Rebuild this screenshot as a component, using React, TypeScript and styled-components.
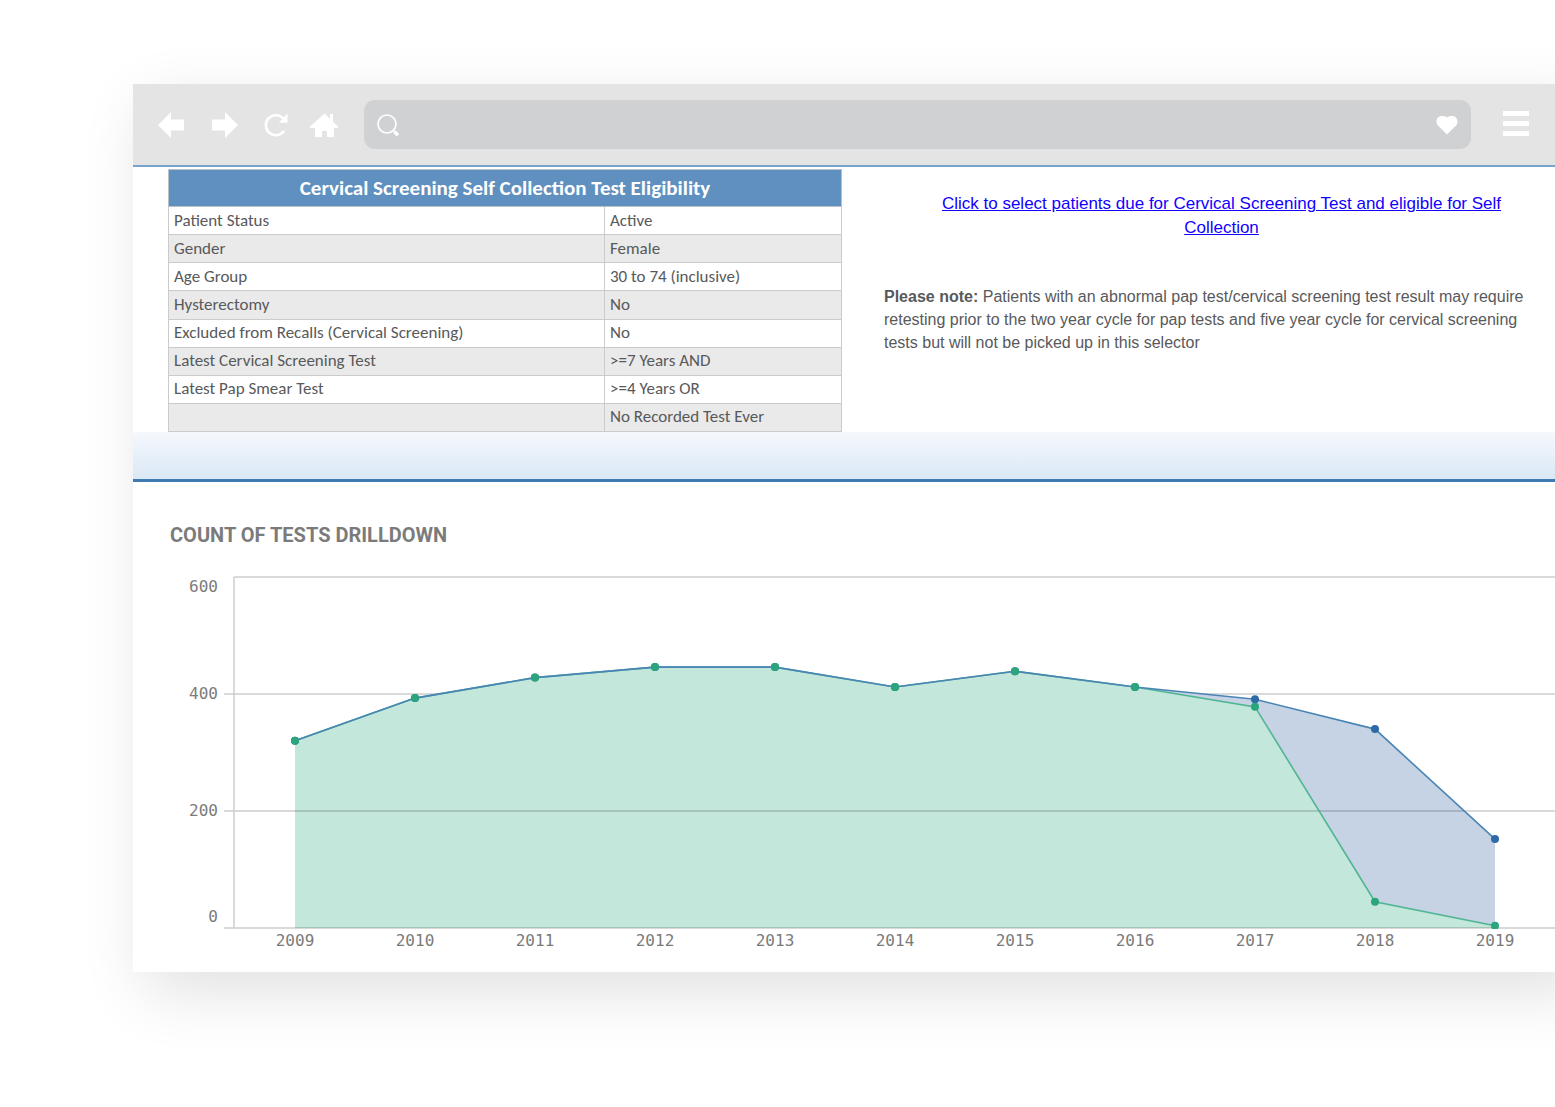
import React from "react";
import styled, { createGlobalStyle } from "styled-components";

const GlobalStyle = createGlobalStyle`
  *, *::before, *::after { box-sizing: border-box; }
  body {
    margin: 0;
    background: #fff;
    font-family: "Liberation Sans", Arial, sans-serif;
  }
`;

const Page = styled.div`
  min-height: 100vh;
  overflow: hidden;
  padding: 84px 0 136px 133px;
`;

/* The window runs past the right edge of the page */
const BrowserWindow = styled.div`
  margin-right: -20px;
  background: #fff;
  box-shadow: 12px 20px 60px rgba(0, 0, 0, 0.12);
`;

const Toolbar = styled.header`
  display: flex;
  align-items: center;
  height: 83px;
  padding: 0 46px 0 23px;
  background: #e4e4e4;
  border-bottom: 2px solid #77a3cd;
`;

const NavGroup = styled.nav`
  display: flex;
  gap: 22px;
  margin-right: 26px;
`;

const IconButton = styled.button<{ $width: number }>`
  display: flex;
  align-items: center;
  justify-content: center;
  flex: none;
  width: ${(p) => p.$width}px;
  height: 28px;
  padding: 0;
  border: 0;
  background: none;
  color: #fff;
  cursor: pointer;

  svg {
    display: block;
    flex: none;
  }
`;

const SearchBar = styled.label`
  display: flex;
  align-items: center;
  flex: 1;
  min-width: 0;
  height: 49px;
  margin-right: 32px;
  padding: 0 12px;
  gap: 12px;
  border-radius: 11px;
  background: #d0d1d3;
  color: #fff;
`;

const SearchInput = styled.input`
  flex: 1;
  min-width: 0;
  height: 100%;
  padding: 0;
  border: 0;
  outline: 0;
  background: transparent;
  color: #555;
  font: 17px "Liberation Sans", Arial, sans-serif;
`;

const Criteria = styled.section`
  display: grid;
  grid-template-columns: 674px minmax(0, 1fr);
  column-gap: 42px;
  padding: 2px 16px 0 35px;
`;

const EligibilityTable = styled.table`
  width: 100%;
  height: 263px;
  table-layout: fixed;
  border-collapse: collapse;
  color: #58595b;
  font: 17px/20px "Carlito", "Calibri", "Noto Sans", sans-serif;
`;

const TitleCell = styled.th`
  height: 37px;
  padding: 0;
  border: 1px solid #b9c0c6;
  background: #5f90c0;
  color: #fff;
  font-size: 21px;
  font-weight: 700;
`;

const Row = styled.tr`
  &:nth-child(even) {
    background: #eaeaea;
  }
`;

const Cell = styled.td`
  padding: 0 5px;
  border: 1px solid #cbcbcb;
`;

const LabelColumn = styled.col`
  width: 436px;
`;

const Notes = styled.div`
  display: flex;
  flex-direction: column;
  gap: 45px;
  padding-top: 23px;
`;

const SelectorLink = styled.a`
  padding: 0 40px;
  color: #1200ff;
  font-size: 17px;
  line-height: 24px;
  text-align: center;
  text-decoration: underline;
`;

const Note = styled.p`
  margin: 0;
  padding-right: 20px;
  color: #58595b;
  font-size: 16px;
  line-height: 23px;
`;

const Band = styled.div`
  height: 50px;
  background: linear-gradient(#f5f8fd, #dae8f5);
  border-bottom: 3px solid #3f7bb0;
`;

const ChartSection = styled.section`
  padding: 39px 0 0 37px;
`;

const ChartTitle = styled.h2`
  margin: 0 0 16px;
  color: #7b7b7b;
  font: 700 20px/28px "Roboto", sans-serif;
`;

const Chart = styled.svg`
  display: block;
  width: 100%;
  height: 407px;

  text {
    fill: #7b7b7b;
    font: 16px "DejaVu Sans Mono", monospace;
  }
`;

const rows = [
  ["Patient Status", "Active"],
  ["Gender", "Female"],
  ["Age Group", "30 to 74 (inclusive)"],
  ["Hysterectomy", "No"],
  ["Excluded from Recalls (Cervical Screening)", "No"],
  ["Latest Cervical Screening Test", ">=7 Years AND"],
  ["Latest Pap Smear Test", ">=4 Years OR"],
  ["", "No Recorded Test Ever"],
];

const years = [2009, 2010, 2011, 2012, 2013, 2014, 2015, 2016, 2017, 2018, 2019];
const allTests = [320, 393, 428, 446, 446, 412, 439, 412, 391, 340, 152];
const papTests = [320, 393, 428, 446, 446, 412, 439, 412, 378, 45, 4];

const BASE = 363;
const AXIS_X = 64;
const xAt = (i: number) => 125 + i * 120;
const yAt = (v: number) => BASE - (v * 351) / 600;
const line = (values: number[]) =>
  values.map((v, i) => `${xAt(i)},${yAt(v).toFixed(1)}`).join(" ");
const area = (values: number[]) =>
  `${xAt(0)},${BASE} ${line(values)} ${xAt(values.length - 1)},${BASE}`;

const upperTicks = [
  { value: 600, label: 27 },
  { value: 400, label: 134 },
];
const lowerTicks = [
  { value: 200, label: 251 },
  { value: 0, label: 357 },
];

function BackIcon() {
  return (
    <svg width="28" height="28" viewBox="0 0 28 28" fill="currentColor" aria-hidden="true">
      <path d="M1 14 14 1v7.500h13v11H14V27z" />
    </svg>
  );
}

function ForwardIcon() {
  return (
    <svg width="28" height="28" viewBox="0 0 28 28" fill="currentColor" aria-hidden="true">
      <path d="M27 14 14 1v7.500H1v11h13V27z" />
    </svg>
  );
}

function ReloadIcon() {
  return (
    <svg width="24" height="24" viewBox="0 0 24 24" aria-hidden="true">
      <path
        d="M19.500 18.600A10 10 0 1 1 18.700 4.900"
        fill="none"
        stroke="currentColor"
        strokeWidth="2.600"
        strokeLinecap="round"
      />
      <path d="M23.500 .5v9.300h-8.700z" fill="currentColor" />
    </svg>
  );
}

function HomeIcon() {
  return (
    <svg width="28" height="24" viewBox="0 0 28 24" fill="currentColor" aria-hidden="true">
      <path d="M14.500 .5 20 5.800V1h3v7.700L28 13.500V15h-4v9h-7v-6h-5v6H5v-9H0v-1.500z" />
    </svg>
  );
}

function SearchIcon() {
  return (
    <svg width="24" height="24" viewBox="0 0 24 24" fill="none" stroke="currentColor" aria-hidden="true">
      <circle cx="11" cy="11" r="9" strokeWidth="1.700" />
      <path d="m17 17 2 2" strokeWidth="1.500" />
      <path d="m18.500 18.700 3.500 3.500" strokeWidth="3.500" />
    </svg>
  );
}

function HeartIcon() {
  return (
    <svg width="22" height="20" viewBox="0 0 22 20" fill="currentColor" aria-hidden="true">
      <path d="M11 19.500 2.200 10.800C.6 9.200.5 7.800.5 6.200.5 3.300 2.900 1 5.700 1 8 1 9.800 1.300 11 2.500 12.200 1.300 14 1 16.300 1c2.800 0 5.200 2.300 5.200 5.200 0 1.600-.1 3-1.700 4.600z" />
    </svg>
  );
}

function MenuIcon() {
  return (
    <svg width="26" height="28" viewBox="0 0 26 28" fill="currentColor" aria-hidden="true">
      <path d="M0 0h26v5H0zM0 10h26v5H0zM0 20h26v5H0z" />
    </svg>
  );
}

function Tick({ value, label }: { value: number; label: number }) {
  return (
    <g>
      <line
        x1={value === 600 ? AXIS_X : 54}
        x2="100%"
        y1={yAt(value)}
        y2={yAt(value)}
        stroke="#000"
        strokeOpacity="0.200"
        strokeWidth="1.500"
      />
      <text x="48" y={label} textAnchor="end">
        {value}
      </text>
    </g>
  );
}

function TestsChart() {
  return (
    <Chart role="img" aria-label="Count of tests per year">
      <defs>
        <clipPath id="plot">
          <rect x="0" y="0" width="100%" height={BASE + 1} />
        </clipPath>
      </defs>
      {upperTicks.map((t) => (
        <Tick key={t.value} {...t} />
      ))}
      <polygon points={area(allTests)} fill="#c5d3e4" />
      <polygon points={area(papTests)} fill="#c3e7da" />
      {lowerTicks.map((t) => (
        <Tick key={t.value} {...t} />
      ))}
      <line x1={AXIS_X} x2={AXIS_X} y1={yAt(600)} y2={BASE} stroke="#ccc" strokeWidth="1.500" />
      <g clipPath="url(#plot)">
        <polyline points={line(papTests)} fill="none" stroke="#4fb592" strokeWidth="1.600" />
        <polyline points={line(allTests)} fill="none" stroke="#4a85b5" strokeWidth="1.600" />
        {allTests.map((v, i) => (
          <circle key={years[i]} cx={xAt(i)} cy={yAt(v)} r="4" fill="#2f6aa8" />
        ))}
        {papTests.map((v, i) => (
          <circle key={years[i]} cx={xAt(i)} cy={yAt(v)} r="4" fill="#2aa57c" />
        ))}
      </g>
      {years.map((year, i) => (
        <text key={year} x={xAt(i)} y="381" textAnchor="middle">
          {year}
        </text>
      ))}
    </Chart>
  );
}

export default function App() {
  return (
    <Page>
      <GlobalStyle />
      <BrowserWindow>
        <Toolbar>
          <NavGroup aria-label="Browser">
            <IconButton $width={30} aria-label="Back">
              <BackIcon />
            </IconButton>
            <IconButton $width={34} aria-label="Forward">
              <ForwardIcon />
            </IconButton>
            <IconButton $width={24} aria-label="Reload">
              <ReloadIcon />
            </IconButton>
            <IconButton $width={28} aria-label="Home">
              <HomeIcon />
            </IconButton>
          </NavGroup>
          <SearchBar>
            <SearchIcon />
            <SearchInput type="text" aria-label="Address" />
            <IconButton $width={24} aria-label="Favourite">
              <HeartIcon />
            </IconButton>
          </SearchBar>
          <IconButton $width={26} aria-label="Menu">
            <MenuIcon />
          </IconButton>
        </Toolbar>
        <Criteria>
          <EligibilityTable>
            <colgroup>
              <LabelColumn />
              <col />
            </colgroup>
            <thead>
              <tr>
                <TitleCell colSpan={2}>Cervical Screening Self Collection Test Eligibility</TitleCell>
              </tr>
            </thead>
            <tbody>
              {rows.map(([label, value]) => (
                <Row key={label}>
                  <Cell>{label}</Cell>
                  <Cell>{value}</Cell>
                </Row>
              ))}
            </tbody>
          </EligibilityTable>
          <Notes>
            <SelectorLink href="#">
              Click to select patients due for Cervical Screening Test and eligible for Self Collection
            </SelectorLink>
            <Note>
              <strong>Please note:</strong> Patients with an abnormal pap test/cervical screening test
              result may require retesting prior to the two year cycle for pap tests and five year cycle
              for cervical screening tests but will not be picked up in this selector
            </Note>
          </Notes>
        </Criteria>
        <Band />
        <ChartSection>
          <ChartTitle>COUNT OF TESTS DRILLDOWN</ChartTitle>
          <TestsChart />
        </ChartSection>
      </BrowserWindow>
    </Page>
  );
}
